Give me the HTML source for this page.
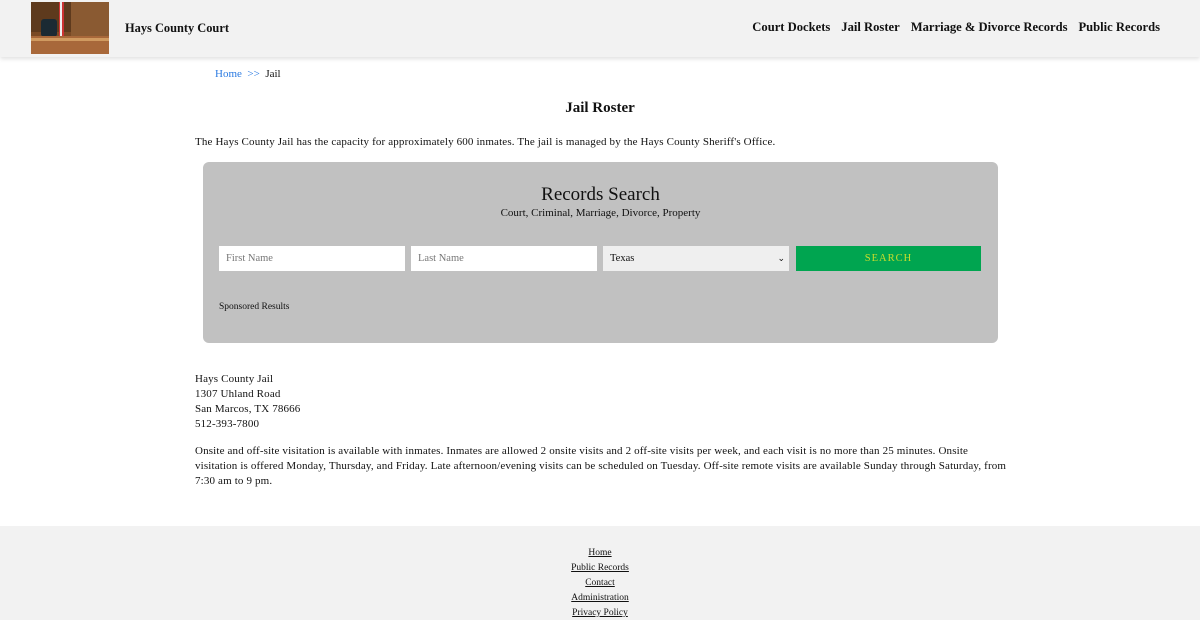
<!DOCTYPE html>
<html><head><meta charset="utf-8"><style>
*{box-sizing:border-box;margin:0;padding:0}
body{width:1200px;height:620px;overflow:hidden;background:#fff;font-family:"Liberation Serif",serif;color:#111;position:relative}
.hdr{position:absolute;left:0;top:0;width:1200px;height:57px;background:#f2f2f2;box-shadow:0 2px 4px rgba(0,0,0,.12)}
.logo{position:absolute;left:31px;top:2px;width:78px;height:52px}
.site{position:absolute;left:125px;top:21px;font-size:12.4px;font-weight:bold}
.nav{position:absolute;right:40px;top:20px;font-size:12.6px;font-weight:bold;white-space:nowrap}
.nav span{margin-left:11px}
.bc{position:absolute;left:215px;top:68px;font-size:11px}
.bc a{color:#2a7ae2;text-decoration:none}
h1{position:absolute;left:0;width:1200px;text-align:center;top:100px;font-size:15px;font-weight:bold}
.p{position:absolute;left:195px;font-size:11px;line-height:15px;width:830px;letter-spacing:.15px}
.box{position:absolute;left:203px;top:162px;width:795px;height:181px;background:#c1c1c1;border-radius:6px}
.box h2{position:absolute;top:22px;width:100%;text-align:center;font-weight:normal;font-size:19px}
.box .sub{position:absolute;top:45px;width:100%;text-align:center;font-size:11px}
.in{position:absolute;top:84px;height:25px;background:#fff;font-size:10.5px;color:#777;padding:7px 7px}
.btn{position:absolute;left:593px;top:84px;width:185px;height:25px;background:#00a550;color:#c9dc2c;font-size:10.5px;text-align:center;line-height:26px;letter-spacing:1px}
.spon{position:absolute;left:16px;top:140px;font-size:9.5px}
.ft{position:absolute;left:0;top:526px;width:1200px;height:94px;background:#f2f2f2;text-align:center;font-size:9.5px;line-height:15px;padding-top:20px}
.ft div{text-decoration:underline}
</style></head><body>
<div class="hdr">
<svg class="logo" viewBox="0 0 78 52"><rect width="78" height="52" fill="#7a4a25"/><rect x="0" y="0" width="78" height="30" fill="#5e3a1d"/><rect x="40" y="0" width="38" height="34" fill="#8a5a32"/><rect x="10" y="17" width="16" height="18" rx="3" fill="#1b2a33"/><rect x="28" y="0" width="5" height="34" fill="#c33"/><rect x="29" y="0" width="2" height="34" fill="#eee"/><rect x="0" y="34" width="78" height="18" fill="#a8683a"/><rect x="0" y="36" width="78" height="3" fill="#d09a60"/></svg>
<div class="site">Hays County Court</div>
<div class="nav"><span>Court Dockets</span><span>Jail Roster</span><span>Marriage &amp; Divorce Records</span><span>Public Records</span></div>
</div>
<div class="bc"><a>Home</a> &nbsp;<a>&gt;&gt;</a>&nbsp; Jail</div>
<h1>Jail Roster</h1>
<div class="p" style="top:135px">The Hays County Jail has the capacity for approximately 600 inmates. The jail is managed by the Hays County Sheriff's Office.</div>
<div class="box">
<h2>Records Search</h2>
<div class="sub">Court, Criminal, Marriage, Divorce, Property</div>
<div class="in" style="left:16px;width:186px">First Name</div>
<div class="in" style="left:208px;width:186px">Last Name</div>
<div class="in" style="left:400px;width:186px;background:#efefef;color:#111">Texas<span style="position:absolute;right:4px;font-size:9px">&#8964;</span></div>
<div class="btn">SEARCH</div>
<div class="spon">Sponsored Results</div>
</div>
<div class="p" style="top:372px">Hays County Jail<br>1307 Uhland Road<br>San Marcos, TX 78666<br>512-393-7800</div>
<div class="p" style="top:444px;white-space:nowrap">Onsite and off-site visitation is available with inmates. Inmates are allowed 2 onsite visits and 2 off-site visits per week, and each visit is no more than 25 minutes. Onsite<br>visitation is offered Monday, Thursday, and Friday. Late afternoon/evening visits can be scheduled on Tuesday. Off-site remote visits are available Sunday through Saturday, from<br>7:30 am to 9 pm.</div>
<div class="ft"><div>Home</div><div>Public Records</div><div>Contact</div><div>Administration</div><div>Privacy Policy</div></div>
</body></html>
